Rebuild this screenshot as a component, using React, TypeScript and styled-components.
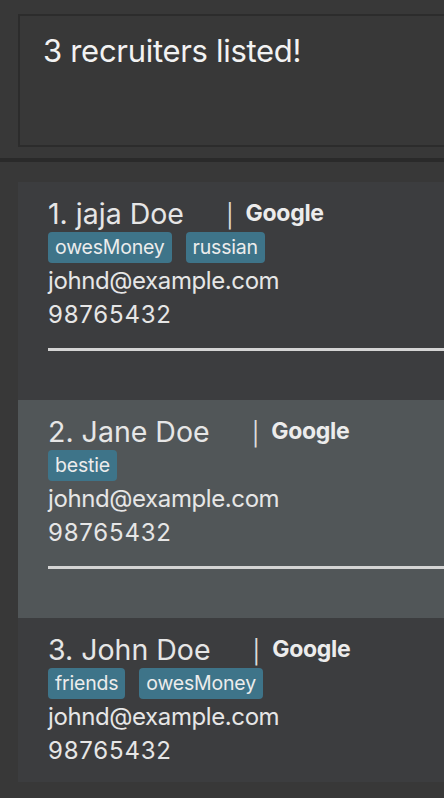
// Library Imports
import * as React from 'react';
import styled, { createGlobalStyle } from 'styled-components';

// Styling
const GlobalStyle = createGlobalStyle`
	html, body {
		margin: 0;
		padding: 0;
		background-color: #383838;
		overflow: hidden;
	}
	body {
		font-family: Inter, "Noto Sans", sans-serif;
	}
`

const AppWrapper = styled.main`
	width: 444px;
	height: 798px;
	overflow: hidden;
	background-color: #383838;
`

const ResultSection = styled.section`
	padding: 14px 0 0 18px;
`

const ResultBox = styled.div`
	width: 480px;
	height: 133px;
	box-sizing: border-box;
	border: 2px solid #2c2c2c;
	padding: 15px 0 0 23px;
	color: #f2f2f2;
	font-size: 31px;
	line-height: 40px;
	letter-spacing: -0.3px;
`

const Divider = styled.div`
	height: 4px;
	margin-top: 11px;
	background-color: #2a2a2a;
`

const ListPanel = styled.section`
	margin: 20px 0 0 18px;
	height: 600px;
	width: 480px;
	overflow: hidden;
	background-color: #3c3d3f;
`

const Card = styled.article<{ $selected?: boolean }>`
	height: 218px;
	box-sizing: border-box;
	padding: 15px 0 0 30px;
	background-color: ${({ $selected }) => ($selected ? '#515658' : '#3c3d3f')};
	color: #e6e6e6;
`

const NameRow = styled.div`
	display: flex;
	align-items: baseline;
	height: 34px;
	line-height: 34px;
`

const Name = styled.span`
	font-size: 28.5px;
`

const Company = styled.span`
	display: flex;
	align-items: baseline;
	gap: 12px;
	margin-left: 42px;
	font-size: 23px;
`

const Pipe = styled.span`
	color: #dcdcdc;
	font-weight: 400;
`

const CompanyName = styled.span`
	position: relative;
	top: -3px;
	font-weight: 700;
	color: #ececec;
	letter-spacing: -0.3px;
`

const Tags = styled.div`
	display: flex;
	gap: 14px;
	margin-top: 1px;
	height: 32px;
`

const Tag = styled.span`
	height: 31px;
	padding: 0 7px;
	border-radius: 4px;
	background-color: #3e7489;
	color: #ececec;
	font-size: 19.5px;
	line-height: 31px;
	letter-spacing: -0.2px;
`

const Detail = styled.div<{ $spacing: number }>`
	font-size: 24px;
	line-height: 34px;
	letter-spacing: ${({ $spacing }) => $spacing}px;
`

const Separator = styled.div`
	height: 3px;
	margin-top: 16px;
	background-color: #d4d4d4;
`

// Local Types
type Recruiter = {
	name: string,
	company: string,
	tags: string[],
	email: string,
	phone: string,
}

const recruiters: Recruiter[] = [
	{ name: 'jaja Doe', company: 'Google', tags: ['owesMoney', 'russian'], email: 'johnd@example.com', phone: '98765432' },
	{ name: 'Jane Doe', company: 'Google', tags: ['bestie'], email: 'johnd@example.com', phone: '98765432' },
	{ name: 'John Doe', company: 'Google', tags: ['friends', 'owesMoney'], email: 'johnd@example.com', phone: '98765432' },
]

// Render
const App = () => {
	return (
		<>
			<GlobalStyle />
			<AppWrapper>
				<ResultSection>
					<ResultBox>{`${recruiters.length} recruiters listed!`}</ResultBox>
				</ResultSection>
				<Divider />
				<ListPanel>
					{recruiters.map((r, index) => (
						<Card key={r.name} $selected={index === 1}>
							<NameRow>
								<Name>{`${index + 1}. ${r.name}`}</Name>
								<Company>
									<Pipe>|</Pipe>
									<CompanyName>{r.company}</CompanyName>
								</Company>
							</NameRow>
							<Tags>
								{r.tags.map((t) => <Tag key={t}>{t}</Tag>)}
							</Tags>
							<Detail $spacing={-0.4}>{r.email}</Detail>
							<Detail $spacing={0.8}>{r.phone}</Detail>
							<Separator />
						</Card>
					))}
				</ListPanel>
			</AppWrapper>
		</>
	)
}

export default App;
